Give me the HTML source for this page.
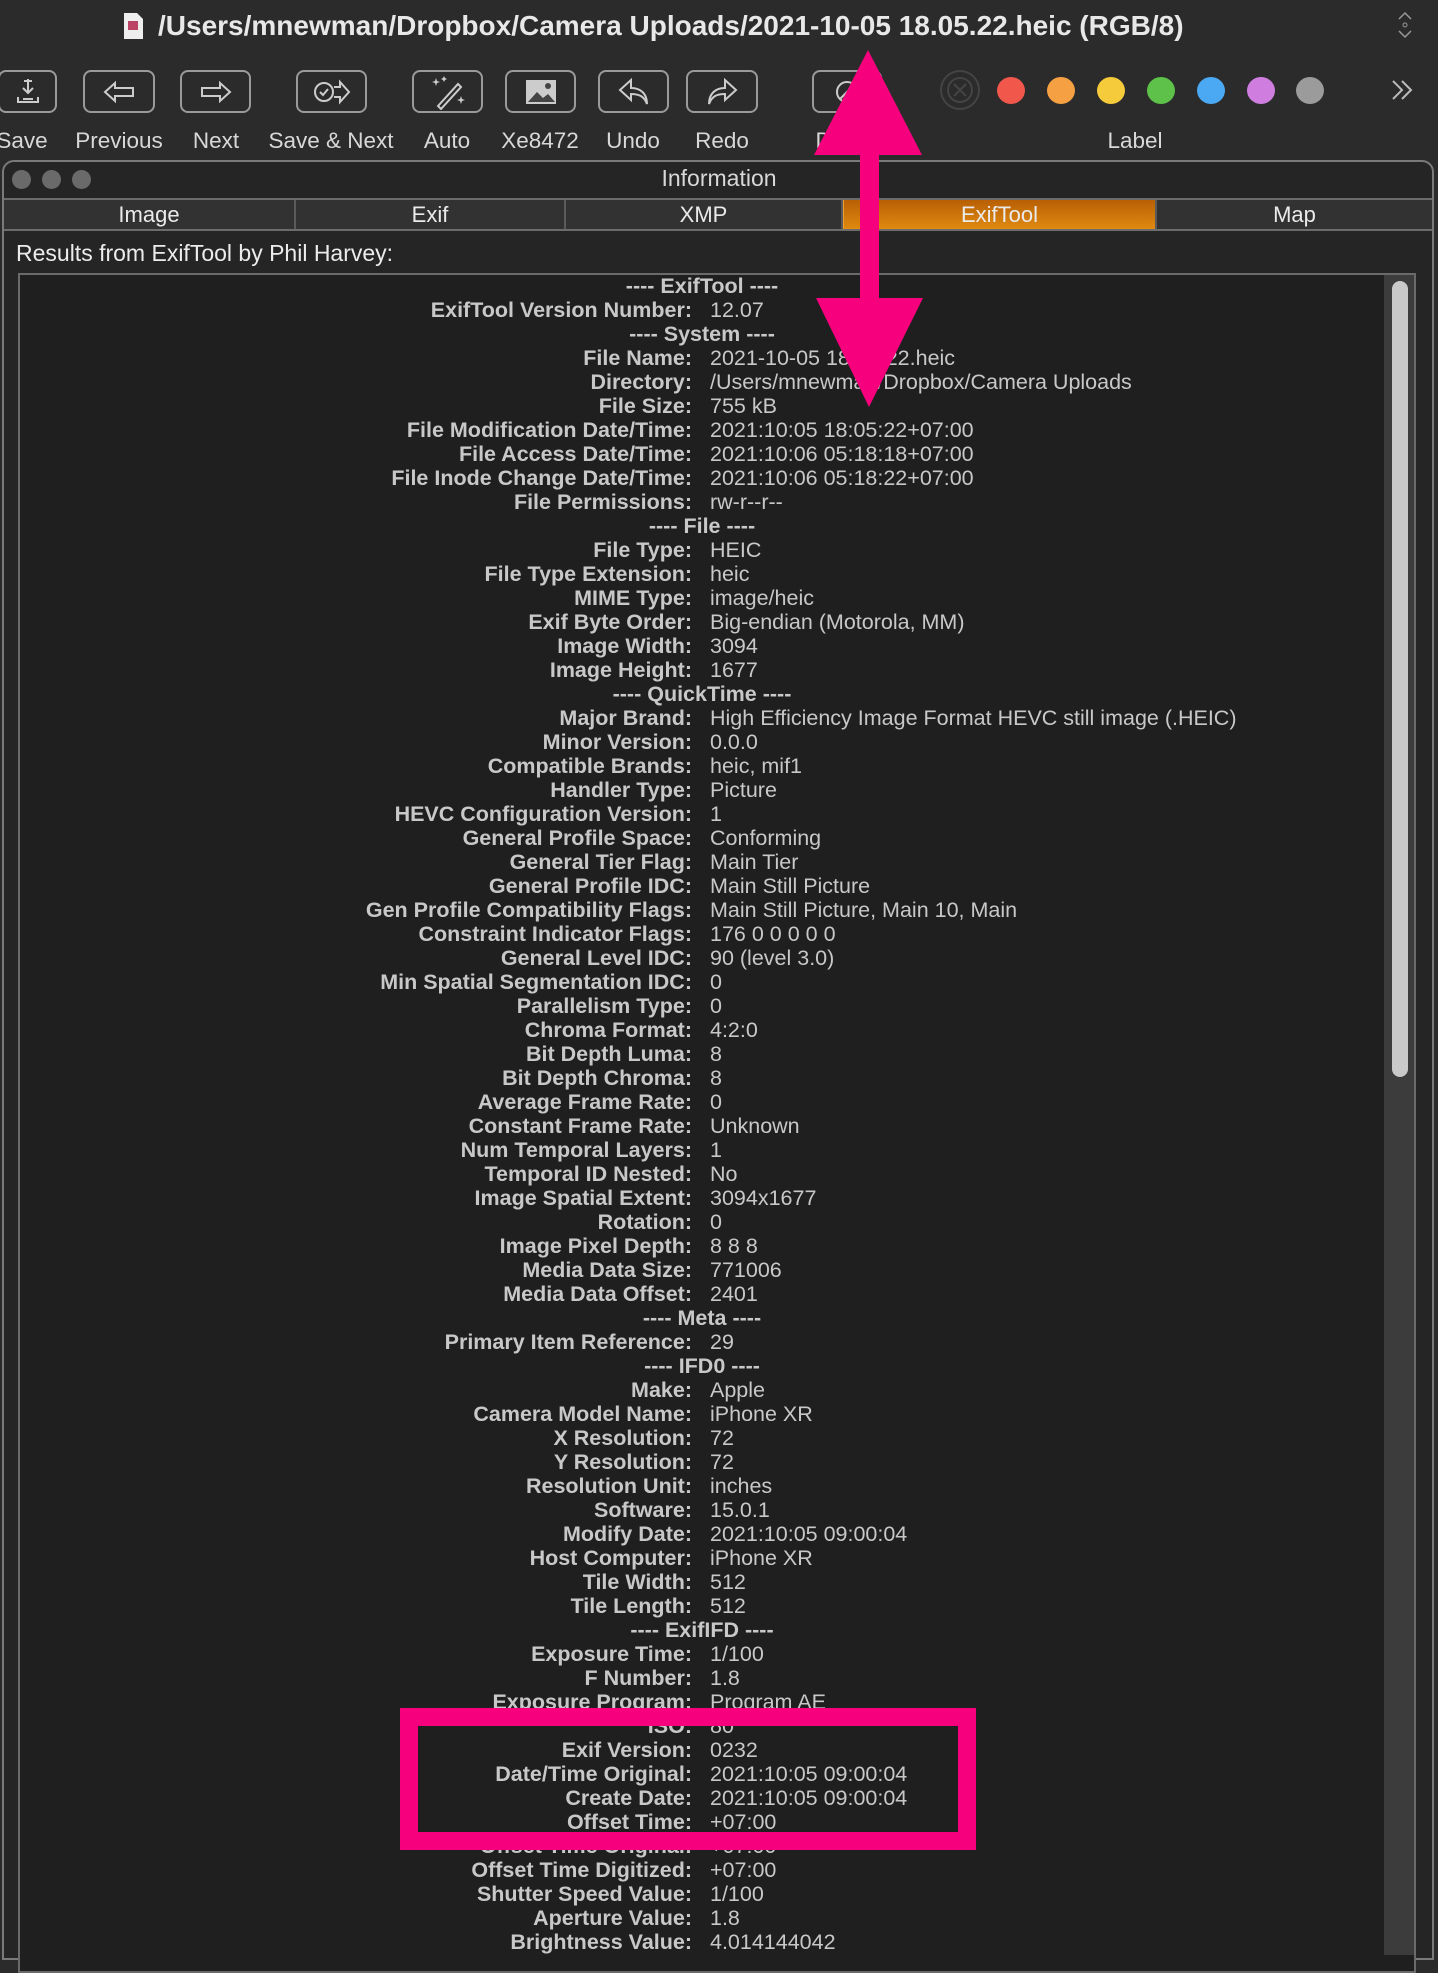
<!DOCTYPE html>
<html><head><meta charset="utf-8">
<style>
*{margin:0;padding:0;box-sizing:border-box}
html,body{width:1438px;height:1942px;overflow:hidden;background:#2b2b2b;font-family:"Liberation Sans",sans-serif}
.abs{position:absolute}
.title{left:158px;top:10px;font-size:28px;font-weight:bold;color:#e8e8e8;white-space:nowrap}
.btn{position:absolute;top:70px;height:43px;border:2px solid #9a9a9a;border-radius:8px}
.btn svg{position:absolute;left:50%;top:50%;transform:translate(-50%,-50%)}
.lbl{position:absolute;top:128px;font-size:22.5px;color:#d8d8d8;white-space:nowrap;transform:translateX(-50%)}
.dot{position:absolute;top:77px;width:28px;height:27px;border-radius:50%}
.panel{left:2px;top:160px;width:1432px;height:1800px;background:#252525;border:2px solid #7a7a7a;border-radius:12px 12px 0 0}
.tl{position:absolute;top:170px;width:19px;height:19px;border-radius:50%;background:#6a6a6a}
.tabs{left:4px;top:198px;width:1428px;height:33px;background:#323232;border-top:2px solid #6c6c6c;border-bottom:2px solid #6c6c6c}
.tab{position:absolute;top:0;height:29px;line-height:29px;text-align:center;font-size:22px;color:#eaeaea;border-right:2px solid #5a5a5a}
.box{left:18px;top:273px;width:1398px;height:1700px;background:#1f1f1f;border:2px solid #6a6a6a}
.rows{left:0;top:274px;width:1400px}
.r{height:24px;line-height:24px;font-size:21.5px;color:#c8c8c8;white-space:nowrap;position:relative}
.r b{position:absolute;right:708px}
.r span{position:absolute;left:710px}
.h{text-align:center;width:1404px;font-weight:bold}
</style></head><body>
<svg class="abs" style="left:122px;top:12px" width="22" height="28"><path d="M2 1h13l6 6v20H2z" fill="#eee"/><rect x="6" y="9" width="10" height="9" fill="#b46"/></svg>
<div class="abs title">/Users/mnewman/Dropbox/Camera Uploads/2021-10-05 18.05.22.heic (RGB/8)</div>
<svg class="abs" style="left:1396px;top:10px" width="18" height="30"><path d="M3 9l6-6 6 6M3 21l6 6 6-6" stroke="#999" fill="none" stroke-width="1.5"/><circle cx="9" cy="15" r="2" fill="none" stroke="#999"/></svg>

<div class="btn" style="left:-2px;width:59px"><svg width="26" height="30" viewBox="0 0 26 30"><path d="M13 2v14M8 11l5 5 5-5M9 4h8M3 20v5h20v-5M8 22h10" stroke="#ccc" stroke-width="2" fill="none"/></svg></div>
<div class="btn" style="left:83px;width:72px"><svg width="36" height="24"><path d="M4 12l10-9v5h18v8H14v5z" stroke="#ccc" stroke-width="2" fill="none"/></svg></div>
<div class="btn" style="left:180px;width:71px"><svg width="36" height="24"><path d="M32 12L22 3v5H4v8h18v5z" stroke="#ccc" stroke-width="2" fill="none"/></svg></div>
<div class="btn" style="left:296px;width:71px"><svg width="40" height="26"><circle cx="12" cy="13" r="9" stroke="#ccc" stroke-width="2" fill="none"/><path d="M8 13l3 3 5-6M22 8h6V3l9 10-9 10v-5h-6" stroke="#ccc" stroke-width="2" fill="none"/></svg></div>
<div class="btn" style="left:412px;width:71px"><svg width="40" height="36"><path d="M10 32L30 10l3 3-20 22z" stroke="#ccc" stroke-width="2" fill="none"/><path d="M8 4l1 3 3 1-3 1-1 3-1-3-3-1 3-1zM16 2l1 2 2 1-2 1-1 2-1-2-2-1 2-1zM33 22l1 3 3 1-3 1-1 3-1-3-3-1 3-1z" fill="#ccc"/></svg></div>
<div class="btn" style="left:505px;width:71px"><svg width="34" height="28"><rect x="2" y="2" width="30" height="24" fill="#ccc"/><path d="M4 24l9-10 6 6 5-4 7 8z" fill="#444"/><circle cx="24" cy="8" r="3" fill="#444"/></svg></div>
<div class="btn" style="left:598px;width:71px"><svg width="34" height="30"><path d="M14 3L3 13l11 10v-6c8 0 13 2 16 10 0-10-6-16-16-16z" stroke="#ccc" stroke-width="2" fill="none"/></svg></div>
<div class="btn" style="left:686px;width:72px"><svg width="34" height="30"><path d="M20 3l11 10-11 10v-6c-8 0-13 2-16 10 0-10 6-16 16-16z" stroke="#ccc" stroke-width="2" fill="none"/></svg></div>
<div class="btn" style="left:812px;width:70px"><svg width="28" height="28"><circle cx="14" cy="14" r="10" stroke="#ccc" stroke-width="2" fill="none"/><path d="M7 21L21 7" stroke="#ccc" stroke-width="2"/></svg></div>
<div class="lbl" style="left:22px">Save</div>
<div class="lbl" style="left:119px">Previous</div>
<div class="lbl" style="left:216px">Next</div>
<div class="lbl" style="left:331px">Save &amp; Next</div>
<div class="lbl" style="left:447px">Auto</div>
<div class="lbl" style="left:540px">Xe8472</div>
<div class="lbl" style="left:633px">Undo</div>
<div class="lbl" style="left:722px">Redo</div>
<div class="lbl" style="left:848px">Delete</div>
<div class="lbl" style="left:1135px">Label</div>
<svg class="abs" style="left:939px;top:69px" width="42" height="42"><circle cx="21" cy="21" r="19" stroke="#444" stroke-width="2" fill="none"/><circle cx="21" cy="21" r="12" stroke="#444" stroke-width="2" fill="none"/><path d="M15 15l12 12M27 15L15 27" stroke="#444" stroke-width="2"/></svg>
<div class="dot" style="left:997px;background:#f2574c"></div>
<div class="dot" style="left:1047px;background:#f5a042"></div>
<div class="dot" style="left:1097px;background:#f5cb3c"></div>
<div class="dot" style="left:1147px;background:#5dc14a"></div>
<div class="dot" style="left:1197px;background:#4ba8f2"></div>
<div class="dot" style="left:1247px;background:#cf7ee0"></div>
<div class="dot" style="left:1296px;background:#9b9b9b"></div>
<svg class="abs" style="left:1390px;top:78px" width="26" height="24"><path d="M3 3l9 9-9 9M12 3l9 9-9 9" stroke="#bbb" stroke-width="2" fill="none"/></svg>

<div class="abs panel"></div>
<div class="tl" style="left:12px"></div><div class="tl" style="left:42px"></div><div class="tl" style="left:72px"></div>
<div class="abs" style="left:0;width:1438px;text-align:center;top:165px;font-size:23px;color:#d8d8d8">Information</div>
<div class="abs tabs">
<div class="tab" style="left:0;width:292px">Image</div>
<div class="tab" style="left:292px;width:270px">Exif</div>
<div class="tab" style="left:562px;width:277px">XMP</div>
<div class="tab" style="left:839px;width:314px;background:linear-gradient(#b85f05,#e08a10);border-left:1px solid #f0a030">ExifTool</div>
<div class="tab" style="left:1153px;width:275px;border-right:none">Map</div>
</div>
<div class="abs" style="left:16px;top:240px;font-size:23px;color:#ececec">Results from ExifTool by Phil Harvey:</div>
<div class="abs box"></div>
<div class="abs" style="left:1384px;top:275px;width:30px;height:1680px;background:#3c3c3c"></div>
<div class="abs" style="left:1392px;top:281px;width:16px;height:796px;border-radius:8px;background:#c9c9c9"></div>

<div class="abs rows">
<div class="r h">---- ExifTool ----</div>
<div class="r"><b>ExifTool Version Number:</b><span>12.07</span></div>
<div class="r h">---- System ----</div>
<div class="r"><b>File Name:</b><span>2021-10-05 18.05.22.heic</span></div>
<div class="r"><b>Directory:</b><span>/Users/mnewman/Dropbox/Camera Uploads</span></div>
<div class="r"><b>File Size:</b><span>755 kB</span></div>
<div class="r"><b>File Modification Date/Time:</b><span>2021:10:05 18:05:22+07:00</span></div>
<div class="r"><b>File Access Date/Time:</b><span>2021:10:06 05:18:18+07:00</span></div>
<div class="r"><b>File Inode Change Date/Time:</b><span>2021:10:06 05:18:22+07:00</span></div>
<div class="r"><b>File Permissions:</b><span>rw-r--r--</span></div>
<div class="r h">---- File ----</div>
<div class="r"><b>File Type:</b><span>HEIC</span></div>
<div class="r"><b>File Type Extension:</b><span>heic</span></div>
<div class="r"><b>MIME Type:</b><span>image/heic</span></div>
<div class="r"><b>Exif Byte Order:</b><span>Big-endian (Motorola, MM)</span></div>
<div class="r"><b>Image Width:</b><span>3094</span></div>
<div class="r"><b>Image Height:</b><span>1677</span></div>
<div class="r h">---- QuickTime ----</div>
<div class="r"><b>Major Brand:</b><span>High Efficiency Image Format HEVC still image (.HEIC)</span></div>
<div class="r"><b>Minor Version:</b><span>0.0.0</span></div>
<div class="r"><b>Compatible Brands:</b><span>heic, mif1</span></div>
<div class="r"><b>Handler Type:</b><span>Picture</span></div>
<div class="r"><b>HEVC Configuration Version:</b><span>1</span></div>
<div class="r"><b>General Profile Space:</b><span>Conforming</span></div>
<div class="r"><b>General Tier Flag:</b><span>Main Tier</span></div>
<div class="r"><b>General Profile IDC:</b><span>Main Still Picture</span></div>
<div class="r"><b>Gen Profile Compatibility Flags:</b><span>Main Still Picture, Main 10, Main</span></div>
<div class="r"><b>Constraint Indicator Flags:</b><span>176 0 0 0 0 0</span></div>
<div class="r"><b>General Level IDC:</b><span>90 (level 3.0)</span></div>
<div class="r"><b>Min Spatial Segmentation IDC:</b><span>0</span></div>
<div class="r"><b>Parallelism Type:</b><span>0</span></div>
<div class="r"><b>Chroma Format:</b><span>4:2:0</span></div>
<div class="r"><b>Bit Depth Luma:</b><span>8</span></div>
<div class="r"><b>Bit Depth Chroma:</b><span>8</span></div>
<div class="r"><b>Average Frame Rate:</b><span>0</span></div>
<div class="r"><b>Constant Frame Rate:</b><span>Unknown</span></div>
<div class="r"><b>Num Temporal Layers:</b><span>1</span></div>
<div class="r"><b>Temporal ID Nested:</b><span>No</span></div>
<div class="r"><b>Image Spatial Extent:</b><span>3094x1677</span></div>
<div class="r"><b>Rotation:</b><span>0</span></div>
<div class="r"><b>Image Pixel Depth:</b><span>8 8 8</span></div>
<div class="r"><b>Media Data Size:</b><span>771006</span></div>
<div class="r"><b>Media Data Offset:</b><span>2401</span></div>
<div class="r h">---- Meta ----</div>
<div class="r"><b>Primary Item Reference:</b><span>29</span></div>
<div class="r h">---- IFD0 ----</div>
<div class="r"><b>Make:</b><span>Apple</span></div>
<div class="r"><b>Camera Model Name:</b><span>iPhone XR</span></div>
<div class="r"><b>X Resolution:</b><span>72</span></div>
<div class="r"><b>Y Resolution:</b><span>72</span></div>
<div class="r"><b>Resolution Unit:</b><span>inches</span></div>
<div class="r"><b>Software:</b><span>15.0.1</span></div>
<div class="r"><b>Modify Date:</b><span>2021:10:05 09:00:04</span></div>
<div class="r"><b>Host Computer:</b><span>iPhone XR</span></div>
<div class="r"><b>Tile Width:</b><span>512</span></div>
<div class="r"><b>Tile Length:</b><span>512</span></div>
<div class="r h">---- ExifIFD ----</div>
<div class="r"><b>Exposure Time:</b><span>1/100</span></div>
<div class="r"><b>F Number:</b><span>1.8</span></div>
<div class="r"><b>Exposure Program:</b><span>Program AE</span></div>
<div class="r"><b>ISO:</b><span>80</span></div>
<div class="r"><b>Exif Version:</b><span>0232</span></div>
<div class="r"><b>Date/Time Original:</b><span>2021:10:05 09:00:04</span></div>
<div class="r"><b>Create Date:</b><span>2021:10:05 09:00:04</span></div>
<div class="r"><b>Offset Time:</b><span>+07:00</span></div>
<div class="r"><b>Offset Time Original:</b><span>+07:00</span></div>
<div class="r"><b>Offset Time Digitized:</b><span>+07:00</span></div>
<div class="r"><b>Shutter Speed Value:</b><span>1/100</span></div>
<div class="r"><b>Aperture Value:</b><span>1.8</span></div>
<div class="r"><b>Brightness Value:</b><span>4.014144042</span></div>
</div>

<div class="abs" style="left:400px;top:1708px;width:576px;height:142px;border:18px solid #f7007e"></div>
<svg class="abs" style="left:0;top:0" width="1438" height="420"><path d="M868 50L922 155H879V298H923L869 407L816 298H860V155H814Z" fill="#f7007e"/></svg>
</body></html>
